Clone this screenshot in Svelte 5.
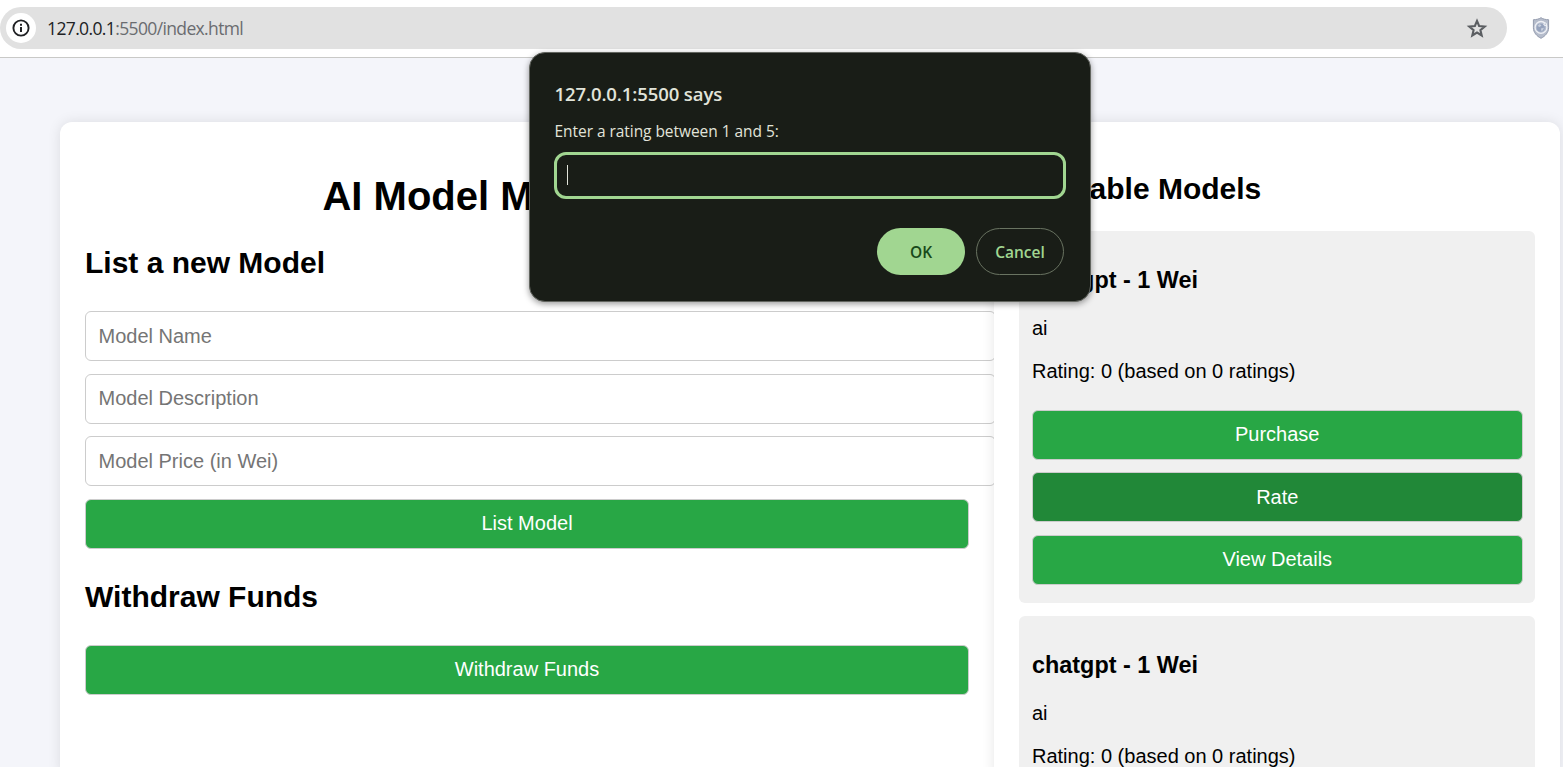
<script>
  const fields = ['Model Name', 'Model Description', 'Model Price (in Wei)'];
  const models = [
    { name: 'chatgpt', price: 1, description: 'ai', rating: 0, count: 0, actions: ['Purchase', 'Rate', 'View Details'], active: 'Rate' },
    { name: 'chatgpt', price: 1, description: 'ai', rating: 0, count: 0, actions: [], active: '' }
  ];
</script>

<div class="window">
  <header class="toolbar">
    <div class="address">
      <span class="info">
        <svg width="18" height="18" viewBox="0 0 18 18" fill="none" stroke="#202124">
          <circle cx="9" cy="9" r="7.6" stroke-width="1.9" />
          <path d="M9 8v5M9 4.800v1.900" stroke-width="2" />
        </svg>
      </span>
      <span class="url"><b>127.0.0.1</b>:5500/index.html</span>
      <svg class="star" width="22" height="22" viewBox="0 0 22 22" fill="none" stroke="#5b5e62" stroke-width="2.1">
        <path d="M11 3.900l2.100 5.100 5.600.5-4.300 3.600 1.300 5.400L11 15.600l-4.700 2.900 1.300-5.400-4.300-3.600 5.600-.5z" />
      </svg>
    </div>
    <svg class="shield" width="18" height="22" viewBox="0 0 18 22">
      <path d="M9 .7c2.200 1.500 5 2 7.600 2v8.100c0 4.700-3.400 8.400-7.600 10.500C4.800 19.200 1.400 15.500 1.400 10.800V2.700C4 2.700 6.800 2.200 9 .7z" fill="#b5bccb" stroke="#949cae" stroke-width="1" />
      <circle cx="9" cy="10.400" r="5.900" fill="#b4bdcf" stroke="#eef0f5" stroke-width="1.300" />
      <circle cx="8.700" cy="10.700" r="4" fill="#96a3bd" />
      <path d="M5.500 9l2.300-2 1.700 1.500-1.800 1.500zM9 11.500l2.900-.8-1 2.500-1.600.9z" fill="#c8cfdd" />
      <circle cx="13.200" cy="7.200" r="1.700" fill="#edf0f5" />
      <circle cx="13.200" cy="7.200" r=".6" fill="#9ca7bd" />
    </svg>
  </header>

  <main class="page">
    <section class="panel form-panel">
      <h1>AI Model Marketplace</h1>
      <h2>List a new Model</h2>
      <div class="fields">
        {#each fields as field}
          <input type="text" placeholder={field} />
        {/each}
        <button>List Model</button>
      </div>
      <h2 class="withdraw">Withdraw Funds</h2>
      <button>Withdraw Funds</button>
    </section>

    <section class="panel list-panel">
      <h2>Available Models</h2>
      {#each models as model}
        <article>
          <h3>{model.name} - {model.price} Wei</h3>
          <p>{model.description}</p>
          <p>Rating: {model.rating} (based on {model.count} ratings)</p>
          <div class="actions">
            {#each model.actions as action}
              <button class:active={action === model.active}>{action}</button>
            {/each}
          </div>
        </article>
      {/each}
    </section>
  </main>

  <div class="dialog" role="dialog" aria-label="Rating">
    <div class="title">127.0.0.1:5500 says</div>
    <div class="message">Enter a rating between 1 and 5:</div>
    <div class="entry"><i></i></div>
    <div class="choices">
      <button class="ok">OK</button>
      <button class="cancel">Cancel</button>
    </div>
  </div>
</div>

<style>
  :global(body) { margin: 0; overflow: hidden; }
  * { box-sizing: border-box; }
  .window {
    position: relative;
    display: flex;
    flex-direction: column;
    width: 1563px;
    height: 767px;
    overflow: hidden;
    background: #f4f5fa;
    font: 20px/23px "Liberation Sans", Arial, sans-serif;
    color: #000;
  }
  .toolbar {
    display: flex;
    flex: none;
    height: 58px;
    padding-top: 7px;
    background: #fff;
    border-bottom: 1px solid #c9c9c7;
  }
  .address {
    display: flex;
    align-items: center;
    width: 1507px;
    height: 42px;
    padding: 0 19px 0 6px;
    border-radius: 21px;
    background: #e1e1e1;
  }
  .info {
    display: grid;
    place-items: center;
    width: 30px;
    height: 30px;
    border-radius: 50%;
    background: #fff;
  }
  .url {
    flex: 1;
    margin-left: 11px;
    font: 17.5px/24px "Open Sans", "Noto Sans", sans-serif;
    letter-spacing: -0.63px;
    color: #6a6c70;
  }
  .url b { font-weight: 400; color: #202124; }
  .shield { margin: 10px 0 0 25px; }

  .page {
    display: flex;
    flex: none;
    height: 720px;
    padding: 64px 0 0 60px;
  }
  .panel {
    padding: 25px;
    background: #fff;
    box-shadow: 0 0 12.5px rgba(0, 0, 0, 0.1);
  }
  .form-panel { width: 934px; border-radius: 12px 0 0 12px; }
  .list-panel { z-index: 1; width: 566px; border-radius: 0 12px 12px 0; }
  h1 { margin: 26px 0 0; font-size: 40px; line-height: 46px; text-align: center; }
  h2 { margin: 26px 0 0; font-size: 30px; line-height: 35px; }
  .fields { display: grid; grid-template-columns: 100%; gap: 12.5px; margin-top: 31px; }
  input, button {
    display: block;
    width: 100%;
    height: 50px;
    margin: 0;
    border: 1px solid #ccc;
    border-radius: 6px;
    font: inherit;
  }
  input { width: 911px; padding: 0 12.5px; background: #fff; }
  input::placeholder { color: #757575; opacity: 1; }
  button { padding: 0 0 1px; background: #28a745; color: #fff; }
  button.active { background: #218838; }
  .withdraw { margin: 30.5px 0 31px; }
  .list-panel h2 { margin: 24px 0 25px; }
  article {
    height: 372px;
    margin-bottom: 13px;
    padding: 36px 12.500px 0 13px;
    border-radius: 6px;
    background: #f0f0f0;
  }
  h3 { margin: 0 0 23px; font-size: 23.4px; line-height: 27px; }
  p { margin: 0 0 20px; }
  .actions { display: grid; gap: 12.5px; margin-top: 26.9px; }
  .actions .active { padding-bottom: 0; }

  .dialog {
    position: absolute;
    z-index: 3;
    left: 529px;
    top: 52px;
    width: 562px;
    height: 250px;
    padding: 27px 24px 0 24.5px;
    border: 1px solid #62655f;
    border-radius: 16px;
    background: #191d17;
    box-shadow: 0 2px 6px rgba(0, 0, 0, 0.4);
    color: #e1e4da;
    font-family: "Open Sans", "Noto Sans", sans-serif;
  }
  .title { font-size: 18.5px; font-weight: 600; line-height: 28px; letter-spacing: -0.1px; }
  .message { margin-top: 11px; font-size: 15.5px; line-height: 24px; letter-spacing: -0.05px; }
  .entry {
    display: flex;
    align-items: center;
    height: 47px;
    width: 512.5px;
    margin: 9px 0 0 -1px;
    padding: 0 0 2px 10px;
    border: 2.500px solid #a1d691;
    border: 3px solid #a1d691;
    border-radius: 12px;
  }
  .entry i { width: 1px; height: 20px; background: #e1e4da; }
  .choices { display: flex; justify-content: flex-end; gap: 11px; margin: 29px 2px 0 0; }
  .choices button {
    width: 88px;
    height: 47px;
    padding: 2px 0 0;
    border: 0;
    border-radius: 24px;
    font-size: 15.5px;
    font-weight: 600;
  }
  .choices .ok { background: #a1d691; color: #18491a; }
  .choices .cancel { border: 1px solid #697361; background: none; color: #a1d691; }
</style>
